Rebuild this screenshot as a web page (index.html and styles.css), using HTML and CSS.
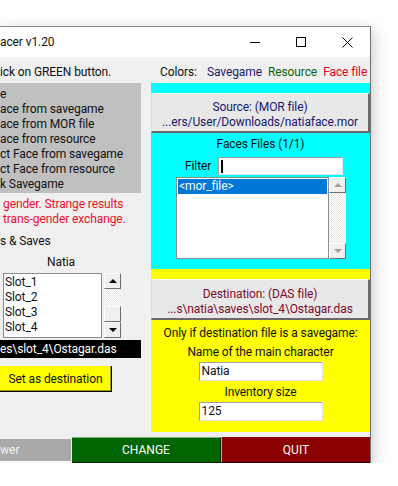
FILE: index.html
```html
<!DOCTYPE html>
<html lang="en">
<head>
    <meta charset="UTF-8">
    <title>Facer v1.20</title>
    <link rel="stylesheet" href="styles.css">
</head>
<body>
    <div class="ventana">
        <div class="titulo">
            <span class="titulo-texto">acer v1.20</span>
            <div class="controles">
                <span class="control">
                    <svg width="10" height="10" viewBox="0 0 10 10"><path d="M0 5.5H10" stroke="#000" stroke-width="1"/></svg>
                </span>
                <span class="control">
                    <svg width="10" height="10" viewBox="0 0 10 10"><rect x="0.5" y="0.5" width="9" height="9" fill="none" stroke="#000" stroke-width="1"/></svg>
                </span>
                <span class="control">
                    <svg width="11" height="11" viewBox="0 0 11 11"><path d="M0.5 0.5L10.5 10.5M10.5 0.5L0.5 10.5" stroke="#000" stroke-width="1"/></svg>
                </span>
            </div>
        </div>

        <div class="cliente">
            <div class="cabecera">
                <span>ick on GREEN button.</span>
                <span class="leyenda">Colors:<span class="c-save">Savegame</span><span class="c-res">Resource</span><span class="c-face">Face file</span></span>
            </div>

            <div class="columnas">
                <div class="izquierda">
                    <div class="modos">
                        <div>e</div>
                        <div>ace from savegame</div>
                        <div>ace from MOR file</div>
                        <div>ace from resource</div>
                        <div>ct Face from savegame</div>
                        <div>ct Face from resource</div>
                        <div>k Savegame</div>
                    </div>
                    <div class="aviso">gender. Strange results<br>trans-gender exchange.</div>
                    <div class="etiqueta">s &amp; Saves</div>
                    <div class="personaje">Natia</div>
                    <div class="fila-lista">
                        <div class="lista slots">
                            <div>Slot_1</div>
                            <div>Slot_2</div>
                            <div>Slot_3</div>
                            <div>Slot_4</div>
                        </div>
                        <div class="scroll">
                            <span class="flecha arriba"></span>
                            <span class="pista"></span>
                            <span class="pulgar"></span>
                            <span class="flecha abajo"></span>
                        </div>
                    </div>
                    <div class="ruta">es\slot_4\Ostagar.das</div>
                    <button type="button" class="boton-destino">Set as destination</button>
                </div>

                <div class="derecha">
                    <div class="franja cian"></div>
                    <div class="boton-archivo origen">Source: (MOR file)<br>...ers/User/Downloads/natiaface.mor</div>
                    <div class="panel cian">
                        <div>Faces Files (1/1)</div>
                        <div class="filtro">
                            <span>Filter</span>
                            <span class="campo filtro-campo"><span class="cursor"></span></span>
                        </div>
                        <div class="fila-lista caras">
                            <div class="lista">
                                <div class="sel">&lt;mor_file&gt;</div>
                            </div>
                            <div class="scroll inactivo">
                                <span class="flecha arriba"></span>
                                <span class="pista"></span>
                                <span class="flecha abajo"></span>
                            </div>
                        </div>
                    </div>
                    <div class="franja amarilla"></div>
                    <div class="boton-archivo destino">Destination: (DAS file)<br>...s\natia\saves\slot_4\Ostagar.das</div>
                    <div class="panel amarilla guardado">
                        <div>Only if destination file is a savegame:</div>
                        <div class="sub">Name of the main character</div>
                        <div class="campo dato">Natia</div>
                        <div class="sub">Inventory size</div>
                        <div class="campo dato">125</div>
                    </div>
                </div>
            </div>

            <div class="acciones">
                <button type="button" class="accion gris">wer</button>
                <button type="button" class="accion verde">CHANGE</button>
                <button type="button" class="accion rojo">QUIT</button>
            </div>
        </div>
    </div>
</body>
</html>
```

FILE: styles.css
```css
body{
    margin: 0;
    background-color: white;
    font-family: Roboto, "Liberation Sans", sans-serif;
    font-size: 12px;
    line-height: 15px;
    letter-spacing: -0.1px;
    color: #111;
    overflow: hidden;
}
.ventana{
    margin-top: 26px;
    width: 370px;
    border-top: 1px solid #8a8a8a;
    border-right: 1px solid #707070;
    box-shadow: 2px 4px 14px rgba(0, 0, 0, 0.22);
}
.titulo{
    height: 30px;
    background-color: white;
    display: flex;
    align-items: center;
}
.titulo-texto{
    flex: 1;
}
.controles{
    display: flex;
}
.control{
    width: 46px;
    height: 30px;
    display: flex;
    align-items: center;
    justify-content: center;
}
.cliente{
    background-color: #f0f0f0;
}
.cabecera{
    height: 26px;
    padding-top: 8px;
    box-sizing: border-box;
    display: grid;
    grid-template-columns: 141px 219px;
    column-gap: 10px;
}
.leyenda{
    padding-left: 9px;
    white-space: nowrap;
}
.c-save{
    color: #191970;
    margin-left: 10px;
}
.c-res{
    color: #0a640a;
    margin-left: 6px;
}
.c-face{
    color: #e0001b;
    margin-left: 6px;
}
.columnas{
    display: grid;
    grid-template-columns: 141px 219px;
    column-gap: 10px;
}
.modos{
    background-color: #c0c0c0;
    height: 110px;
    padding-top: 4px;
    box-sizing: border-box;
}
.aviso{
    color: #e8102a;
    padding: 4px 0 0 3px;
}
.etiqueta{
    margin-top: 7px;
}
.personaje{
    width: 122px;
    text-align: center;
    margin-top: 6px;
}
.fila-lista{
    display: flex;
    margin-top: 3px;
}
.lista{
    background-color: white;
    border: 1px solid #8c8c8c;
    box-sizing: border-box;
    padding-top: 1px;
}
.slots{
    margin-left: 3px;
    width: 99px;
    height: 65px;
    padding-left: 1px;
}
.scroll{
    margin-left: 2px;
    width: 17px;
    display: flex;
    flex-direction: column;
    background: repeating-conic-gradient(#ffffff 0 25%, #e6e6e6 0 50%) 0 0 / 2px 2px;
}
.pista{
    flex: 1;
}
.flecha, .pulgar{
    height: 16px;
    background-color: #f0f0f0;
    border-top: 1px solid #ffffff;
    border-left: 1px solid #ffffff;
    border-right: 1px solid #6d6d6d;
    border-bottom: 1px solid #6d6d6d;
    box-sizing: border-box;
    display: flex;
    align-items: center;
    justify-content: center;
}
.slots + .scroll .pista{
    flex: 0 0 17px;
}
.flecha::after{
    content: "";
    border-left: 4px solid transparent;
    border-right: 4px solid transparent;
}
.arriba::after{
    border-bottom: 4px solid black;
}
.abajo::after{
    border-top: 4px solid black;
}
.inactivo .arriba::after{
    border-bottom-color: #a0a0a0;
}
.inactivo .abajo::after{
    border-top-color: #a0a0a0;
}
.ruta{
    margin-top: 2px;
    height: 18px;
    line-height: 18px;
    background-color: black;
    color: white;
    white-space: nowrap;
    overflow: hidden;
}
.boton-destino{
    margin-top: 8px;
    width: 112px;
    height: 26px;
    background-color: yellow;
    border: none;
    border-right: 1px solid black;
    border-bottom: 1px solid black;
    box-shadow: inset -1px -1px 0 #a0a000;
    font-family: inherit;
    font-size: 12px;
    letter-spacing: -0.1px;
    color: #111;
    padding: 0;
    display: block;
}
.franja{
    height: 10px;
}
.cian{
    background-color: #00ffff;
}
.amarilla{
    background-color: yellow;
}
.boton-archivo{
    background-color: #e8e8e8;
    border-top: 1px solid #ffffff;
    border-left: 1px solid #dcdcdc;
    border-right: 2px solid #696969;
    border-bottom: 2px solid #696969;
    text-align: center;
    box-sizing: border-box;
    white-space: nowrap;
}
.origen{
    height: 40px;
    padding-top: 6px;
    color: #191970;
}
.destino{
    height: 41px;
    padding-top: 7px;
    color: #7f0a2a;
}
.panel{
    text-align: center;
    box-sizing: border-box;
}
.panel.cian{
    height: 136px;
    padding-top: 4px;
}
.filtro{
    display: flex;
    align-items: center;
    margin-top: 5px;
    padding-left: 34px;
    gap: 7px;
}
.campo{
    background-color: white;
    border-top: 1px solid #a0a0a0;
    border-left: 1px solid #a0a0a0;
    border-right: 1px solid #e3e3e3;
    border-bottom: 1px solid #e3e3e3;
    box-sizing: border-box;
    text-align: left;
}
.filtro-campo{
    width: 125px;
    height: 18px;
    display: flex;
    align-items: center;
    padding-left: 2px;
}
.cursor{
    width: 2px;
    height: 13px;
    background-color: black;
}
.caras{
    margin-top: 2px;
    margin-left: 25px;
}
.caras .lista{
    width: 153px;
    height: 82px;
    padding: 1px 1px 0 1px;
    text-align: left;
}
.caras .scroll{
    margin-left: 0;
    height: 82px;
}
.sel{
    background-color: #0078d7;
    color: white;
    padding-left: 1px;
}
.guardado{
    height: 112px;
    padding-top: 6px;
}
.sub{
    margin-top: 4px;
}
.dato{
    width: 124px;
    height: 19px;
    margin: 2px auto 0 auto;
    padding-left: 2px;
    line-height: 17px;
}
.acciones{
    margin-top: 5px;
    display: flex;
    height: 26px;
}
.accion{
    border: none;
    font-family: inherit;
    font-size: 12px;
    color: white;
    padding: 0;
    height: 26px;
}
.gris{
    width: 71px;
    margin-top: 2px;
    height: 23px;
    background-color: #a9a9a9;
    color: #f4f4f4;
    text-align: left;
    border-bottom: 1px solid white;
    margin-right: 1px;
}
.verde{
    width: 149px;
    background-color: #006400;
    border-top: 1px solid #7fb07f;
    border-bottom: 1px solid #102010;
    border-right: 1px solid #0a2a0a;
}
.rojo{
    width: 149px;
    background-color: #8b0000;
    border-left: 1px solid #c8a0a0;
    border-bottom: 1px solid #200000;
}
```
